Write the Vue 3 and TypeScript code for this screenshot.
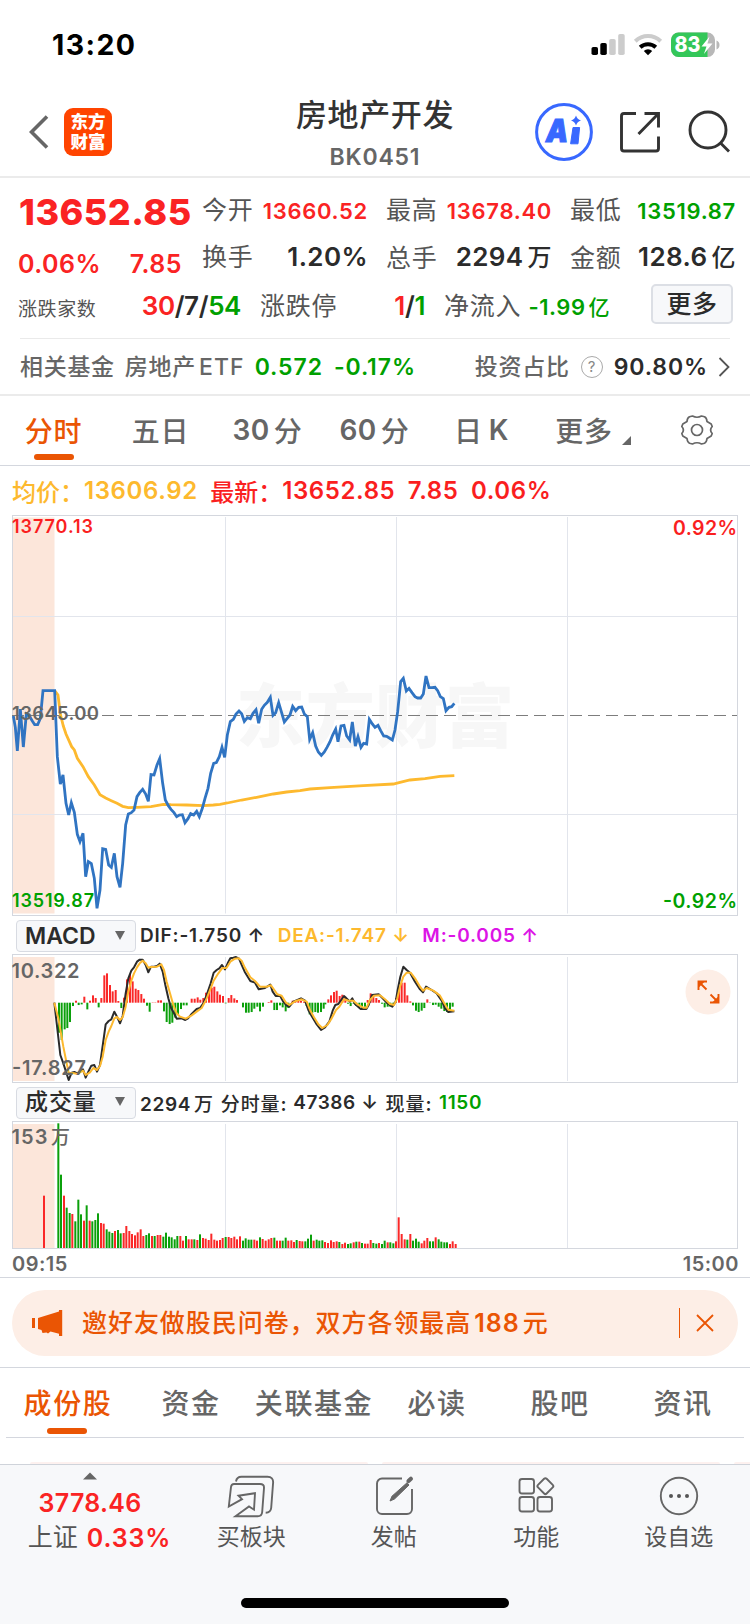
<script setup lang="ts">
interface Bar {
  x: number
  y: number
  h: number
  up: boolean
}

// Series samples are stored in thirds of a pixel, relative to a panel origin.
function line(samples: string, ox: number, oy: number): string {
  return samples
    .trim()
    .split(/\s+/)
    .map((p) => {
      const [x, y] = p.split(',').map(Number)
      return `${(ox + x / 3).toFixed(2)},${(oy + y / 3).toFixed(2)}`
    })
    .join(' ')
}

const price =
  line(
    `40,228 46,262 52,333 61,207 70,321 79,222 88,228 97,243 104,254 113,254 121,235 129,152 164,152 172,350 181,432
    189,405 198,490 206,525 214,488 223,517 232,583 240,605 249,580 257,710 265,665 274,671 283,715 291,805 300,750
    308,626 317,628 326,675 334,682 343,640 351,710 360,742 368,670 377,555 385,522 394,518 402,510 411,470 419,458
    428,448 437,462 445,484 453,404 462,405 471,375 479,356 488,430 496,480 505,497 513,508 522,518 530,530 538,525
    547,524 555,548 564,536 572,521 581,525 590,514 598,530 607,505 615,475 624,445 632,400 641,370 649,368 658,350`,
    0,
    640,
  ) +
  ' ' +
  line(
    `6,322 14,352 22,285 31,245 40,238 48,222 57,213 65,221 73,244 82,233 91,236 99,220 108,209 116,250 125,208
    133,196 142,187 151,172 159,226 167,218 176,188 184,215 193,246 201,236 210,225 218,199 227,212 236,202 245,201
    253,222 262,230 269,298 278,278 287,318 295,336 304,346 313,336 321,322 330,305 338,285 347,267 354,305 363,258
    372,256 380,288 389,300 397,246 406,318 414,290 423,322 431,310 440,312 448,238 457,252 465,262 474,256 482,272
    491,288 500,289 508,294 517,300 525,270 533,215 542,125 550,115 559,153 567,145 576,158 585,170 593,174 602,174
    610,162 618,108 627,143 636,143 645,142 653,152 661,170 670,176 678,212 687,202 695,200 703,190`,
    220,
    640,
  )

const average =
  line(
    `164,152 174,165 181,222 190,258 198,282 215,320 223,330 232,355 249,380 265,410 283,435 300,464 317,474 334,482
    351,490 368,499 385,503 411,502 453,500 490,493 513,494 560,495 610,497 640,495`,
    0,
    640,
  ) +
  ' ' +
  line(
    `0,493 22,489 65,480 110,472 160,462 200,456 240,452 270,447 330,443 430,437 520,432 540,427 570,420 615,416
    660,409 703,407`,
    220,
    640,
  )

const dif =
  line(
    `163,278 181,435 190,460 206,510 215,488 223,486 232,490 240,485 249,478 257,503 265,485 274,467 283,465 291,485
    300,465 317,343 326,333 334,328 343,305 351,320 360,340 368,318 377,250 385,205 394,182 402,172 411,155 419,149
    428,149 437,165 445,187 453,170 462,170 471,168 479,161 488,185 496,225 505,265 513,293 522,310 530,326 545,325
    556,330 564,325 575,312 590,297 600,294 610,280 620,255 632,220 641,188 650,180 658,175 666,165 675,178 683,160
    691,145 700,143 708,141 717,146`,
    0,
    910,
  ) +
  ' ' +
  line(
    `4,162 14,185 31,213 45,218 56,238 75,234 91,224 98,245 107,258 120,257 130,275 140,287 148,290 160,275 183,265
    195,272 205,300 215,318 228,340 243,360 255,352 268,335 278,302 286,285 295,282 312,258 330,275 337,265 345,282
    362,297 379,297 386,285 396,255 416,253 428,265 440,278 457,290 467,275 473,240 481,200 490,170 500,180 510,188
    525,215 540,238 549,247 558,230 575,240 590,250 605,272 615,295 625,306 643,304`,
    240,
    910,
  )

const dea =
  line(
    `163,278 175,325 190,410 198,450 206,488 223,490 232,492 249,482 257,495 270,487 280,474 291,480 300,468 308,440
    317,390 326,365 334,348 343,325 351,321 360,330 368,322 377,290 385,245 394,212 402,190 411,172 419,160 428,152
    437,160 445,173 453,171 471,170 484,163 492,180 500,215 510,250 520,285 530,310 540,320 557,326 575,316 590,305
    605,294 618,270 632,235 641,212 655,190 666,175 680,173 691,155 705,146 716,145`,
    0,
    910,
  ) +
  ' ' +
  line(
    `5,152 14,172 31,202 45,213 60,230 80,230 93,226 103,240 112,253 125,257 138,278 148,285 165,274 185,268 200,275
    210,300 222,322 235,343 247,354 262,345 275,325 288,300 298,290 312,268 325,272 340,272 352,283 370,293 380,293
    390,270 402,257 420,256 435,268 450,282 462,285 472,265 480,230 490,200 500,188 512,188 525,205 540,230 549,242
    560,234 580,242 600,257 612,278 625,299 643,302`,
    240,
    910,
  )

const macdSamples = `177:-90 185:-112 194:-80 202:-76 210:-58 219:-10 228:6 236:-7 245:-5 253:18 262:-20 270:6 279:22
  287:14 296:-14 304:14 313:82 321:88 330:53 338:34 347:38 355:5 364:-16 372:15 381:70 390:86 398:64 407:42 415:38
  424:26 432:12 441:-9 449:-27 458:1 466:1 475:7 483:7 492:-26 500:-58 509:-64 517:-60 526:-45 534:-35 543:-19
  551:-8 560:-8 575:12 584:12 593:16 601:9 610:14 618:30 627:40 635:45 643:48 652:34 660:24 669:20 677:-2 686:14
  694:23 703:13 711:8 729:-14 738:-30 746:-30 755:-28 763:-18 772:-12 780:-26 789:-12 806:2 814:7 823:-22 831:-22
  840:-8 848:-14 857:-26 865:-16 878:6 886:5 895:7 903:6 912:3 920:-10 929:-35 937:-30 946:-28 954:-30 963:-28
  971:-18 976:-5 985:10 993:22 1002:32 1010:36 1019:20 1027:24 1036:18 1044:-3 1052:-10 1061:-3 1069:-10 1078:-12
  1086:-16 1095:-12 1103:8 1112:28 1120:26 1129:14 1137:8 1146:-3 1154:-14 1163:-12 1171:-12 1180:-8 1188:14
  1197:45 1205:60 1214:60 1222:22 1231:4 1239:-8 1248:-24 1256:-28 1265:-24 1273:-16 1282:10 1290:-1 1299:-7
  1307:-6 1316:-12 1324:-18 1333:-25 1341:-28 1350:-24 1358:-12`

const macdBars: Bar[] = macdSamples.split(/\s+/).map((s) => {
  const [x, v] = s.split(':').map(Number)
  const zero = 1002.7
  return { x: x / 3 - 1, y: v > 0 ? zero - v / 3 : zero, h: Math.abs(v) / 3, up: v > 0 }
})

const volumeSamples = `132:157r 175:374g 183:220g 192:157r 200:121g 209:105g 217:102r 226:80g 235:145g 243:101g 252:82r
  260:128g 269:82r 277:80g 286:84g 294:104g 303:75r 311:73r 320:56g 328:49g 337:45g 345:51r 354:54g 362:44g 371:45r
  379:66r 388:51r 396:42r 405:38r 413:47r 422:56r 430:36r 439:39g 447:44g 456:36r 464:36g 473:39r 481:39r 490:34g
  498:46g 507:34g 515:32g 524:26g 532:36g 541:36r 549:22r 558:36g 566:26r 575:26r 583:26g 592:24r 600:41g 609:30r
  617:28r 626:24r 634:43r 643:25r 651:22r 660:24r 668:30r 677:33g 686:33r 694:30r 703:34r 711:26r 720:35r 729:22g
  737:29g 746:25g 754:25g 763:25r 771:22r 780:32g 788:27r 797:22r 806:26r 814:30r 823:31g 831:22r 840:22r 848:22g
  857:31g 865:22r 874:23r 882:18r 890:24g 899:21r 907:20r 916:20g 924:28g 933:40g 941:22r 950:25g 958:22g 967:23g
  975:18r 984:15r 993:23r 1001:18r 1010:20r 1018:18g 1027:12r 1035:16r 1044:12g 1052:14g 1061:17r 1069:19g 1078:19r
  1086:15g 1095:13r 1103:13r 1112:24r 1120:15g 1129:13g 1137:15r 1146:12g 1154:22g 1163:17r 1171:17g 1180:14g
  1188:20r 1196:92r 1205:42r 1214:26r 1222:25g 1231:42r 1239:22g 1248:28g 1256:19g 1265:14r 1273:22r 1282:30r
  1290:20g 1299:20g 1307:32r 1316:26g 1324:19g 1333:17g 1341:17g 1350:12r 1358:20r 1367:12r`

const volumeBars: Bar[] = volumeSamples.split(/\s+/).map((s) => {
  const [x, v] = s.split(':')
  const h = parseInt(v, 10) / 3
  return { x: Number(x) / 3 - 1, y: 1248 - h, h, up: v.endsWith('r') }
})

const gridX = [225.5, 396.5, 567.5]
const periods = [
  { pre: '', text: '分时', post: '' },
  { pre: '', text: '五日', post: '' },
  { pre: '30', text: '分', post: '' },
  { pre: '60', text: '分', post: '' },
  { pre: '', text: '日', post: 'K' },
  { pre: '', text: '更多', post: '' },
]
const sections = ['成份股', '资金', '关联基金', '必读', '股吧', '资讯']
</script>

<template>
  <div class="screen">
    <header class="status">
      <span class="clock">13:20</span>
      <svg class="status-icons" width="130" height="28" viewBox="590 31 130 28">
        <rect x="591.5" y="47" width="6.5" height="8" rx="1.8" />
        <rect x="600.3" y="43" width="6.5" height="12" rx="1.8" />
        <rect x="609.2" y="39" width="6.5" height="16" rx="1.8" fill="#ccc" />
        <rect x="618.2" y="34" width="6.5" height="21" rx="1.8" fill="#ccc" />
        <g fill="none">
          <path d="M635.3 41.2a18.3 18.3 0 0 1 25.4 0" stroke="#ccc" stroke-width="4" />
          <path d="M640.2 47.3a11.6 11.6 0 0 1 15.6 0" stroke="#000" stroke-width="4" />
        </g>
        <path d="M648 55.2l-4.2-4.2a6 6 0 0 1 8.4 0z" />
        <clipPath id="cell"><rect x="671" y="32.5" width="44" height="24.5" rx="7.5" /></clipPath>
        <g clip-path="url(#cell)">
          <rect x="671" y="32" width="44" height="26" fill="#b8b8b8" />
          <rect x="671" y="32" width="36.5" height="26" fill="#34c759" />
        </g>
        <path d="M716.5 40.5q3 1.2 3 4.5t-3 4.5z" fill="#b8b8b8" />
        <text x="674.5" y="52.3" class="charge" textLength="26" lengthAdjust="spacingAndGlyphs">83</text>
        <path d="M709.5 36.5l-8 10h5l-2.6 7.5 8.6-10.4h-5z" fill="#fff" />
      </svg>
    </header>

    <nav class="nav">
      <div class="nav-left">
        <svg width="20" height="36" viewBox="0 0 20 36">
          <path d="M18 2.5L2.5 18 18 33.5" fill="none" stroke="#666" stroke-width="3.6" />
        </svg>
        <div class="logo"><span>东方</span><span>财富</span></div>
      </div>
      <div class="nav-title">
        <h1>房地产开发</h1>
        <p>BK0451</p>
      </div>
      <div class="nav-right">
        <svg width="58" height="58" viewBox="535 103 58 58">
          <circle cx="564" cy="132" r="27.4" fill="#fff" stroke="#3868ff" stroke-width="3" />
          <text x="546" y="142.3" class="ai" textLength="22" lengthAdjust="spacingAndGlyphs">A</text>
          <path d="M573 127.5h6.6l-1.6 16.3h-7.4z" fill="#3868ff" stroke="#3868ff" stroke-linejoin="round" />
          <path d="M576 115.5q1.2 3.8 5 5-3.8 1.2-5 5-1.2-3.8-5-5 3.8-1.2 5-5z" fill="#3868ff" />
        </svg>
        <svg width="42" height="42" viewBox="619 111 42 42" class="stroked">
          <path d="M636 113.5H624a2.5 2.5 0 0 0-2.5 2.5v32.5a2.5 2.5 0 0 0 2.5 2.5h32a2.5 2.5 0 0 0 2.5-2.5V136.5" />
          <path d="M644.5 113.5h14v14M658.5 113.5l-20 20.5" />
        </svg>
        <svg width="44" height="44" viewBox="687 110 44 44" class="stroked">
          <circle cx="708" cy="130" r="18" />
          <path d="M720.5 143l8.5 8.5" />
        </svg>
      </div>
    </nav>

    <section class="quote">
      <div class="row r1">
        <b class="last red">13652.85</b>
        <div class="cell"><label>今开</label><span class="small red">13660.52</span></div>
        <div class="cell"><label>最高</label><span class="small red">13678.40</span></div>
        <div class="cell"><label>最低</label><span class="small green">13519.87</span></div>
      </div>
      <div class="row r2">
        <div class="change red"><span>0.06%</span><span>7.85</span></div>
        <div class="cell"><label>换手</label><span>1.20%</span></div>
        <div class="cell"><label>总手</label><span>2294<i>万</i></span></div>
        <div class="cell"><label>金额</label><span>128.6<i>亿</i></span></div>
      </div>
      <div class="row r3">
        <div class="cell wide">
          <label class="mini">涨跌家数</label>
          <span class="tight"><em class="red">30</em>/7/<em class="green">54</em></span>
        </div>
        <div class="cell">
          <label>涨跌停</label><span class="tight"><em class="red">1</em>/<em class="green">1</em></span>
        </div>
        <div class="cell"><label>净流入</label><span class="small flow green">-1.99<i>亿</i></span></div>
        <button class="more">更多</button>
      </div>
      <div class="fund">
        <span class="gray">相关基金</span>
        <span class="gray etf">房地产<i>ETF</i></span>
        <span class="green num n1">0.572</span>
        <span class="green num n2">-0.17%</span>
        <span class="gray ratio">投资占比</span>
        <span class="help">?</span>
        <span class="num n3">90.80%</span>
        <svg width="12" height="20" viewBox="0 0 12 20">
          <path d="M1.5 1l9 9-9 9" fill="none" stroke="#555" stroke-width="1.8" />
        </svg>
      </div>
    </section>

    <div class="periods">
      <div v-for="(p, i) in periods" :key="i" class="period" :class="{ active: i === 0, menu: i === 5 }">
        <b v-if="p.pre" class="pre">{{ p.pre }}</b><span>{{ p.text }}</span><b v-if="p.post" class="post">{{ p.post }}</b>
        <svg v-if="i === 5" class="corner" width="9" height="9"><path d="M9 0v9H0z" fill="#666" /></svg>
      </div>
      <div class="period gear">
        <svg width="34" height="34" viewBox="-17 -17 34 34" fill="none" stroke="#666" stroke-width="1.7">
          <circle r="5.5" />
          <path
            d="M-4.5 -14Q0 -11.5 4.5 -14L7.5 -13.2Q9.8 -12 10 -8.5Q12 -7.3 14.2 -6L15.2 -3.5Q12 0 15.2 3.5L14.2 6Q12 7.3 10 8.5Q9.8 12 7.5 13.2L4.5 14Q0 11.5 -4.5 14L-7.5 13.2Q-9.8 12 -10 8.5Q-12 7.3 -14.2 6L-15.2 3.5Q-12 0 -15.2 -3.5L-14.2 -6Q-12 -7.3 -10 -8.5Q-9.8 -12 -7.5 -13.2Z"
            stroke-linejoin="round"
          />
        </svg>
      </div>
    </div>

    <div class="legend">
      <span class="amber">均价：</span><span class="amber v">13606.92</span>
      <span class="bright l2">最新：</span><span class="bright v">13652.85</span>
      <span class="bright v2">7.85</span><span class="bright v3">0.06%</span>
    </div>

    <svg class="panel" width="750" height="402" viewBox="0 515 750 402">
      <rect x="13" y="517.5" width="41.5" height="396" fill="#fce6da" />
      <text class="mark" x="236" y="742" textLength="278">东方财富</text>
      <g stroke="#e2e5ec">
        <path d="M13 616.5H737M13 814.5H737" />
        <path v-for="x in gridX" :key="x" :d="`M${x} 517V913.5`" />
      </g>
      <rect x="12.5" y="515.5" width="725" height="400" fill="none" stroke="#d4d7de" />
      <path d="M12 715.5H737" stroke="#7d7d7d" stroke-dasharray="12 6" />
      <polyline :points="average" class="avg" />
      <polyline :points="price" class="price" />
      <g class="scale">
        <text x="12" y="533.3" font-size="18" fill="#fa1f1f" textLength="81">13770.13</text>
        <text x="673" y="535.3" font-size="19.5" fill="#fa1f1f" textLength="64">0.92%</text>
        <text x="12" y="720" font-size="18.5" fill="#666" textLength="87">13645.00</text>
        <text x="12" y="906.5" font-size="18" fill="#00a000" textLength="82">13519.87</text>
        <text x="663" y="908.3" font-size="19.5" fill="#00a000" textLength="74">-0.92%</text>
      </g>
    </svg>

    <div class="indicator macd">
      <button class="pick">MACD<i></i></button>
      <span class="dif">DIF:-1.750 ↑</span>
      <span class="amber dea">DEA:-1.747 ↓</span>
      <span class="magenta m">M:-0.005 ↑</span>
    </div>

    <svg class="panel" width="750" height="130" viewBox="0 954 750 130">
      <rect x="13" y="957" width="41.5" height="124" fill="#fce6da" />
      <path v-for="x in gridX" :key="x" :d="`M${x} 957V1081`" stroke="#e2e5ec" />
      <rect x="12.5" y="954.5" width="725" height="128" fill="none" stroke="#d4d7de" />
      <rect v-for="b in macdBars" :key="b.x" :x="b.x" :y="b.y" width="2" :height="b.h" :fill="b.up ? '#fa2828' : '#0ba00b'" />
      <g fill="none" stroke-linejoin="round">
        <polyline :points="dif" stroke="#2b2b2b" stroke-width="2" />
        <polyline :points="dea" stroke="#fdb92e" stroke-width="2" />
      </g>
      <g class="scale" font-size="20" fill="#666">
        <text x="11.5" y="977.5" textLength="68">10.322</text>
        <text x="12" y="1075.2" textLength="74">-17.827</text>
      </g>
      <circle cx="708" cy="992" r="22.5" fill="#fdeee6" />
      <g fill="none" stroke="#ea5504" stroke-width="1.9">
        <path d="M698.5 990v-8.5h8.5M698.5 981.5l8 8M718.5 994v8.5h-8.5M718.5 1002.5l-8-8" />
        <path d="M703 982l-4 0 0 4zM714 1002l4 0 0-4z" fill="#ea5504" />
      </g>
    </svg>

    <div class="indicator vol">
      <button class="pick zh">成交量<i></i></button>
      <span class="a1">2294<em>万</em></span>
      <span class="a2"><em>分时量</em>:</span>
      <span class="a3">47386 ↓</span>
      <span class="a4"><em>现量</em>:</span>
      <span class="a5 green">1150</span>
    </div>

    <svg class="panel" width="750" height="129" viewBox="0 1121 750 129">
      <rect x="13" y="1124" width="41.5" height="124" fill="#fce6da" />
      <path v-for="x in gridX" :key="x" :d="`M${x} 1124V1248`" stroke="#e2e5ec" />
      <rect x="12.5" y="1121.5" width="725" height="127" fill="none" stroke="#d4d7de" />
      <rect v-for="b in volumeBars" :key="b.x" :x="b.x" :y="b.y" width="2" :height="b.h" :fill="b.up ? '#fa2828' : '#0ba00b'" />
      <g font-size="20" fill="#666">
        <text class="scale" x="11.5" y="1144" textLength="36">153</text>
        <text x="51" y="1143.5" font-size="19" font-weight="500">万</text>
      </g>
    </svg>
    <div class="hours"><span>09:15</span><span>15:00</span></div>

    <div class="banner-wrap">
      <div class="banner">
        <svg width="32" height="28" viewBox="31 1309 32 28" fill="#ea5504">
          <path d="M32 1318h3v10h-3zM38 1318l21-6.5v-1.5h3.2v26H59v-2.3l-8.5-2.2-2.5 2-1.5-1-4 .6-1-3-3.5-1.1z" />
        </svg>
        <p>邀好友做股民问卷，双方各领最高<b>188</b>元</p>
        <span class="bar"></span>
        <svg width="18" height="18" viewBox="0 0 18 18">
          <path d="M1 1l16 16M17 1L1 17" stroke="#ea5504" stroke-width="1.8" />
        </svg>
      </div>
    </div>

    <div class="sections">
      <span v-for="(s, i) in sections" :key="s" :class="{ active: i === 0 }">{{ s }}</span>
    </div>
    <div class="cards"><i></i><i></i><i></i></div>

    <footer class="dock">
      <div class="index">
        <svg width="14" height="8"><path d="M7 0.5l7 7H0z" fill="#666" /></svg>
        <span class="red iv">3778.46</span>
        <span class="ip"><label>上证</label><span class="red">0.33%</span></span>
      </div>
      <div class="item">
        <svg width="48" height="44" viewBox="0 0 48 44" class="thin">
          <path d="M9 6.5q.7-4.7 5.5-4.7h26q6 0 5.6 6l-1.9 25q-.4 4.8-5.5 5" />
          <path d="M7 9h26q4.3 0 4 4l-1.8 24q-.4 4.3-4.5 4.3H8.5L22 31.5l5 3.2 1-16.5-16.5 2.5 3.5 3.5L1.8 31.5 4 12q.4-3 3-3z" />
        </svg>
        <span>买板块</span>
      </div>
      <div class="item">
        <svg width="48" height="44" viewBox="0 0 48 44" class="thin">
          <path d="M32 3.5H12a5 5 0 0 0-5 5v25.500a5 5 0 0 0 5 5h25a5 5 0 0 0 5-5V14" />
          <path d="M20 26l2-4.8L37 7.8l2 2.2L24.5 24z" fill="#666" stroke-width="1" />
          <path d="M38.5 6l2.4-2.2" stroke-width="4.2" stroke-linecap="round" />
        </svg>
        <span>发帖</span>
      </div>
      <div class="item">
        <svg width="48" height="44" viewBox="0 0 48 44" class="thin">
          <rect x="7.5" y="4" width="14.5" height="14.5" rx="2.5" />
          <rect x="7.5" y="22" width="14.5" height="14.5" rx="2.5" />
          <rect x="25.5" y="22" width="14.5" height="14.5" rx="2.5" />
          <rect x="27.2" y="5" width="12.2" height="12.2" rx="1.8" transform="rotate(45 33.3 11.2)" />
        </svg>
        <span>功能</span>
      </div>
      <div class="item">
        <svg width="48" height="44" viewBox="0 0 48 44" class="thin">
          <circle cx="24" cy="21" r="18.2" />
          <g fill="#555" stroke="none">
            <circle cx="16" cy="21" r="2" />
            <circle cx="24" cy="21" r="2" />
            <circle cx="32" cy="21" r="2" />
          </g>
        </svg>
        <span>设自选</span>
      </div>
      <div class="home"></div>
    </footer>
  </div>
</template>

<style>
body {
  margin: 0;
  background: #fff;
}
</style>

<style scoped>
.screen {
  width: 750px;
  height: 1624px;
  overflow: hidden;
  background: #fff;
  color: #2b2b2b;
  font-family: Inter, 'Noto Sans CJK SC', sans-serif;
  font-weight: 500;
  white-space: nowrap;
}
.screen * {
  box-sizing: border-box;
}
svg {
  display: block;
  flex: none;
}
i,
em {
  font-style: normal;
}
button {
  font: inherit;
  color: inherit;
  padding: 0;
}
.red {
  color: #fa2323;
}
.green {
  color: #00a000;
}
.amber {
  color: #fdb92e;
}
.bright {
  color: #fa1f1f;
}
.magenta {
  color: #dc14e6;
}
.scale {
  font-weight: 560;
}
.status {
  height: 88px;
  padding: 0 30px 0 52px;
  display: flex;
  align-items: center;
  justify-content: space-between;
}
.status-icons {
  margin-top: 2px;
}
.clock {
  font-size: 28.5px;
  font-weight: 700;
  color: #000;
  letter-spacing: 1.4px;
  line-height: 88px;
  padding-top: 2px;
}
.charge {
  font-size: 22px;
  font-weight: 800;
  fill: #fff;
}
.nav {
  height: 90px;
  border-bottom: 2px solid #ebebeb;
  display: grid;
  grid-template-columns: 1fr auto 1fr;
}
.nav-left {
  display: flex;
  align-items: center;
  padding-left: 29px;
  gap: 15px;
}
.logo {
  width: 48px;
  height: 48px;
  border-radius: 9px;
  background: #ff4400;
  color: #fff;
  font-size: 17.5px;
  font-weight: 900;
  line-height: 20px;
  display: flex;
  flex-direction: column;
  align-items: center;
  justify-content: center;
  padding-bottom: 1px;
}
.nav-title {
  text-align: center;
}
.nav-title h1 {
  margin: 0;
  padding-top: 9px;
  font-size: 31px;
  font-weight: 500;
  line-height: 36px;
  letter-spacing: 0.6px;
  color: #333;
}
.nav-title p {
  margin: 9px 0 0;
  font-size: 23px;
  font-weight: 560;
  line-height: 30px;
  color: #666;
  letter-spacing: 0.8px;
}
.nav-right {
  display: flex;
  justify-content: flex-end;
  align-items: center;
  padding-right: 19px;
  gap: 26px;
}
.ai {
  font-size: 32px;
  font-weight: 900;
  font-style: italic;
  fill: #3868ff;
  stroke: #3868ff;
  stroke-width: 1.2;
}
.stroked {
  fill: none;
  stroke: #333;
  stroke-width: 2.9;
}
.quote {
  height: 218px;
  border-bottom: 2px solid #ebebeb;
}
.row {
  display: grid;
  grid-template-columns: 164px 164px 164px 164px;
  column-gap: 20px;
  padding-left: 18px;
  font-size: 26px;
  align-items: center;
}
.r1 {
  height: 63px;
}
.r2 {
  height: 33px;
  grid-template-rows: 32px;
  align-items: start;
}
.r3 {
  height: 64px;
  grid-template-columns: 222px 164px 164px auto;
}
.cell {
  display: flex;
  align-items: center;
  justify-content: space-between;
  line-height: 32px;
}
.cell label {
  font-size: 25px;
  font-weight: 400;
  color: #555;
  letter-spacing: 0.7px;
  line-height: 32px;
}
.cell .mini {
  font-size: 19px;
  letter-spacing: 0.6px;
  padding-top: 7px;
}
.cell i {
  font-size: 24px;
  font-weight: 500;
  margin-left: 4px;
}
.cell span {
  font-weight: 560;
  letter-spacing: 0.4px;
  margin-right: -2px;
}
.cell .small {
  font-size: 22px;
  letter-spacing: 0.7px;
  padding-top: 3px;
}
.cell .flow {
  letter-spacing: 0.5px;
}
.cell .flow i {
  font-size: 21px;
  margin-left: 3px;
}
.cell .tight {
  letter-spacing: -0.4px;
  margin-right: -1px;
}
.last {
  font-size: 36px;
  font-weight: 800;
  line-height: 40px;
  letter-spacing: 0.5px;
  padding-top: 5px;
  margin-left: 1px;
}
.change {
  font-size: 25px;
  font-weight: 560;
  letter-spacing: 0.5px;
  display: flex;
  justify-content: space-between;
  padding-top: 7px;
  line-height: 32px;
}
.more {
  width: 82px;
  height: 40px;
  margin-left: 23px;
  margin-top: -4px;
  border: 2px solid #dcdfe5;
  border-radius: 5px;
  background: #f7f8fa;
  font-size: 25px;
  letter-spacing: 0.5px;
  line-height: 32px;
}
.fund {
  margin: 0 20px;
  height: 56px;
  border-top: 1px solid #eaeaea;
  display: flex;
  align-items: center;
  font-size: 23px;
}
.gray {
  color: #666;
  letter-spacing: 0.7px;
  margin-top: -3px;
}
.etf {
  margin-left: 10px;
}
.etf i {
  margin-left: 3px;
  letter-spacing: 1.1px;
}
.num {
  font-weight: 560;
  letter-spacing: 0.9px;
}
.n1 {
  margin-left: 10px;
}
.n2 {
  margin-left: 11px;
}
.ratio {
  margin-left: auto;
}
.help {
  width: 22px;
  height: 22px;
  border: 1.5px solid #aaa;
  border-radius: 50%;
  margin: 0 11px;
  font-size: 15px;
  font-weight: 400;
  line-height: 19px;
  text-align: center;
  color: #888;
}
.n3 {
  margin-right: 10px;
}
.periods {
  height: 70px;
  border-bottom: 1px solid #d4d7de;
  display: grid;
  grid-template-columns: repeat(7, 107px);
  font-size: 28px;
  color: #666;
}
.period {
  position: relative;
  display: flex;
  justify-content: center;
  align-items: center;
  letter-spacing: 0.8px;
  padding-bottom: 2px;
}
.period b {
  font-weight: 600;
  letter-spacing: 0.5px;
}
.period .pre {
  margin-right: 4px;
}
.period .post {
  margin-left: 6px;
}
.period.menu {
  padding-left: 9px;
}
.period.gear {
  padding-left: 2px;
}
.active {
  color: #ea5504;
}
.period.active::after {
  content: '';
  position: absolute;
  left: 34px;
  bottom: 5px;
  width: 40px;
  height: 6px;
  border-radius: 3px;
  background: #ea5504;
}
.corner {
  margin: 22px 0 0 9px;
}
.legend {
  height: 49px;
  padding: 0 0 1px 12px;
  display: flex;
  align-items: center;
  font-size: 24px;
}
.legend .v,
.legend .v2,
.legend .v3 {
  font-weight: 560;
  letter-spacing: 0.6px;
}
.legend .l2,
.legend .v2,
.legend .v3 {
  margin-left: 12.5px;
}
.mark {
  font-size: 69px;
  font-weight: 900;
  fill: #f7f7f7;
}
.price {
  fill: none;
  stroke: #3074c2;
  stroke-width: 2.8;
}
.avg {
  fill: none;
  stroke: #fdb92e;
  stroke-width: 2.8;
}
.indicator {
  height: 37px;
  padding-left: 16px;
  display: flex;
  align-items: center;
  font-size: 19px;
  font-weight: 580;
  letter-spacing: 0.6px;
}
.macd {
  letter-spacing: 0.8px;
}
.indicator em {
  font-weight: 500;
  letter-spacing: 0.9px;
}
.pick {
  width: 120px;
  height: 32px;
  border: 1.5px solid #d8dbe2;
  border-radius: 4px;
  background: #f7f8fa;
  font-size: 23px;
  display: flex;
  align-items: center;
  justify-content: space-between;
  padding: 0 10px 0 8px;
  margin-right: 4px;
}
.pick.zh {
  font-weight: 500;
  letter-spacing: 0.9px;
  line-height: 26px;
  padding-bottom: 2px;
}
.pick i {
  border: 5px solid transparent;
  border-top: 9px solid #666;
  border-bottom: 0;
}
.dea,
.m {
  margin-left: 12.5px;
}
.a1 em {
  margin-left: 3px;
}
.a2 {
  margin-left: 7px;
}
.a3 {
  margin-left: 6px;
}
.a4,
.a5 {
  margin-left: 7px;
}
.hours {
  height: 28px;
  padding: 0 11px 0 12px;
  border-bottom: 1px solid #d4d7de;
  display: flex;
  justify-content: space-between;
  align-items: center;
  font-size: 20px;
  font-weight: 560;
  color: #666;
  letter-spacing: 0.5px;
}
.banner-wrap {
  height: 90px;
  padding: 12px 12px 0;
  border-bottom: 1px solid #d4d7de;
}
.banner {
  height: 66px;
  border-radius: 33px;
  background: #fdeee6;
  color: #ea5504;
  display: flex;
  align-items: center;
  padding: 0 24px 0 19px;
}
.banner p {
  margin: -4px auto 0 19px;
  font-size: 25px;
  letter-spacing: 0.95px;
}
.banner b {
  font-weight: 600;
  margin: 0 3px;
}
.bar {
  width: 1px;
  height: 30px;
  background: #ea5504;
  margin-right: 16px;
}
.sections {
  height: 70px;
  margin: 0 6px;
  border-bottom: 1px solid #d4d7de;
  display: grid;
  grid-template-columns: repeat(6, 1fr);
  font-size: 28px;
  line-height: 73px;
  text-align: center;
  letter-spacing: 1.6px;
  text-indent: 1px;
  color: #666;
}
.sections .active {
  position: relative;
  color: #ea5504;
}
.sections .active::after {
  content: '';
  position: absolute;
  left: 41px;
  bottom: 7px;
  width: 40px;
  height: 6px;
  border-radius: 3px;
  background: #ea5504;
}
.cards {
  height: 26px;
  display: flex;
  align-items: flex-end;
  gap: 14px;
  padding-left: 30px;
  overflow: hidden;
}
.cards i {
  flex: none;
  width: 338px;
  height: 2px;
  border-radius: 12px 12px 0 0;
  background: #fdf1ef;
}
.dock {
  height: 160px;
  border-top: 1px solid #cfd3da;
  background: #f7f8fa;
  display: grid;
  grid-template-columns: 180px repeat(4, 142.5px);
  grid-template-rows: 133px 10px;
}
.index {
  display: flex;
  flex-direction: column;
  align-items: center;
  padding-top: 7px;
  font-size: 25px;
}
.iv {
  margin-top: 7px;
  line-height: 32px;
  font-weight: 560;
  letter-spacing: 0.3px;
}
.ip {
  display: flex;
  gap: 9px;
  line-height: 36px;
  margin: 1px 0 0 19px;
}
.ip label {
  font-weight: 400;
  color: #555;
  margin-top: -1px;
}
.ip .red {
  font-weight: 560;
  letter-spacing: 0.9px;
}
.item {
  display: flex;
  flex-direction: column;
  align-items: center;
  padding-top: 10px;
  font-size: 23px;
  font-weight: 400;
  color: #555;
}
.item span {
  line-height: 34px;
  margin-top: 1px;
}
.thin {
  fill: none;
  stroke: #666;
  stroke-width: 1.9;
}
.home {
  grid-column: 1 / -1;
  justify-self: center;
  width: 268px;
  height: 10px;
  border-radius: 5px;
  background: #000;
}
</style>
